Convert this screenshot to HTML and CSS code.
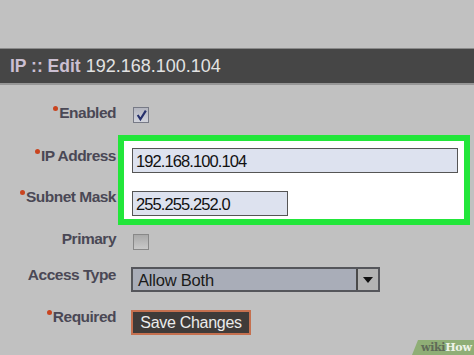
FILE: index.html
```html
<!DOCTYPE html>
<html lang="en">
<head>
  <meta charset="UTF-8">
  <title>IP :: Edit</title>
  <link rel="stylesheet" href="styles.css">
</head>
<body>
  <div class="titlebar">
    <b class="title-kind">IP :: Edit</b> 192.168.100.104
  </div>

  <form class="ip-form">
    <div class="row row-enabled">
      <label class="label req">Enabled</label>
      <div class="field">
        <span class="checkbox checked">
          <svg width="12" height="12" viewBox="0 0 12 12"><path d="M2.5 5.5 L5 9.5 L10 1.5" fill="none" stroke="#26306c" stroke-width="2"/></svg>
        </span>
      </div>
    </div>

    <div class="row group">
      <div class="group-labels">
        <label class="label req">IP Address</label>
        <label class="label req">Subnet Mask</label>
      </div>
      <div class="highlight">
        <input type="text" class="text-input wide" value="192.168.100.104">
        <input type="text" class="text-input short" value="255.255.252.0">
      </div>
    </div>

    <div class="row row-primary">
      <label class="label">Primary</label>
      <div class="field">
        <span class="checkbox"></span>
      </div>
    </div>

    <div class="row row-access">
      <label class="label">Access Type</label>
      <div class="field">
        <div class="select">
          <span class="select-value">Allow Both</span>
          <span class="select-arrow"></span>
        </div>
      </div>
    </div>

    <div class="row row-required">
      <label class="label req">Required</label>
      <div class="field">
        <button type="button" class="save">Save Changes</button>
      </div>
    </div>
  </form>

  <div class="badge"><span class="badge-wiki">wiki</span><span class="badge-how">How</span></div>
</body>
</html>
```

FILE: styles.css
```css
body {
  margin: 0;
  padding-top: 48px;
  box-sizing: border-box;
  background: #c1c1c1;
  font-family: "Liberation Sans", Arial, sans-serif;
  width: 474px;
  height: 355px;
  overflow: hidden;
  position: relative;
}

.titlebar {
  height: 34px;
  line-height: 34px;
  padding-left: 10px;
  background: #464646;
  border-top: 1px solid #8a8a8a;
  border-bottom: 2px solid #979797;
  color: #e2e2e2;
  font-size: 18px;
}

.title-kind {
  color: #cbbfd2;
  font-size: 17.5px;
}

.ip-form {
  padding-top: 19px;
}

.row {
  display: flex;
  align-items: flex-start;
}

.label {
  width: 116px;
  text-align: right;
  font-size: 15.5px;
  letter-spacing: -0.5px;
  font-weight: bold;
  line-height: 18px;
  height: 18px;
  color: #4a4855;
  white-space: nowrap;
}

.req::before {
  content: "";
  display: inline-block;
  width: 5px;
  height: 5px;
  border-radius: 50%;
  background: #c9441f;
  vertical-align: top;
  position: relative;
  top: 2px;
  margin-right: 1px;
}

.field {
  margin-left: 15px;
}

/* checkboxes */
.checkbox {
  display: flex;
  align-items: center;
  justify-content: center;
  width: 14px;
  height: 14px;
  margin-left: 2px;
  border: 1px solid #777a86;
  background: linear-gradient(#b4b6c0, #d2d4dc);
}

.checkbox svg {
  width: 13px;
  height: 13px;
}

.row-enabled .checkbox {
  margin-top: 3px;
}

.row-primary .checkbox {
  margin-top: 4px;
  border-color: #888;
  background: linear-gradient(#a9a9a9, #c9c9c9);
}

/* highlighted ip group */
.group {
  margin-top: 12px;
}

.group-labels {
  display: flex;
  flex-direction: column;
  gap: 23px;
  padding-top: 12px;
}

.highlight {
  flex: 1;
  margin-left: 2px;
  margin-right: 4px;
  border: 6px solid #22e63a;
  background: #fff;
  padding: 7px 6px 3px 8px;
  display: flex;
  flex-direction: column;
  gap: 18px;
}

.text-input {
  box-sizing: border-box;
  height: 25px;
  padding: 2px 3px 0;
  border: 1px solid #555;
  background: #dde2ef;
  font-family: "Liberation Sans", Arial, sans-serif;
  font-size: 16.5px;
  letter-spacing: -0.9px;
  color: #111;
}

.wide {
  width: 100%;
}

.short {
  width: 156px;
}

.row-primary {
  margin-top: 5px;
}

/* select */
.row-access {
  margin-top: 16px;
}

.select {
  display: flex;
  box-sizing: border-box;
  width: 249px;
  height: 25px;
  margin-top: 1px;
  border: 2px solid #55565b;
  background: #a9adb8;
}

.select-value {
  flex: 1;
  padding-left: 5px;
  line-height: 22px;
  font-size: 16.5px;
  letter-spacing: -0.2px;
  color: #1a1a1a;
}

.select-arrow {
  width: 20px;
  background: #b3b3b3;
  border-left: 2px solid #4a4a4a;
  display: flex;
  align-items: center;
  justify-content: center;
}

.select-arrow::after {
  content: "";
  border-left: 5px solid transparent;
  border-right: 5px solid transparent;
  border-top: 6px solid #111;
}

/* button */
.row-required {
  margin-top: 16px;
}

.save {
  width: 120px;
  height: 25px;
  margin-top: 2px;
  padding: 0;
  background: #3f3b39;
  border: 2px solid #c5704f;
  color: #ebebeb;
  font-family: "Liberation Sans", Arial, sans-serif;
  font-size: 16px;
  letter-spacing: -0.3px;
}

/* watermark */
.badge {
  position: absolute;
  right: 0;
  bottom: 0;
  width: 62px;
  height: 15px;
  padding-left: 9px;
  background: #8fae76;
  clip-path: polygon(6px 0, 100% 0, 100% 100%, 0 100%);
  font-family: "DejaVu Serif", serif;
  font-size: 11px;
  font-weight: bold;
  line-height: 16px;
  letter-spacing: -0.3px;
  box-sizing: border-box;
}

.badge-wiki {
  color: #5f6a58;
}

.badge-how {
  color: #eef3e8;
}
```
